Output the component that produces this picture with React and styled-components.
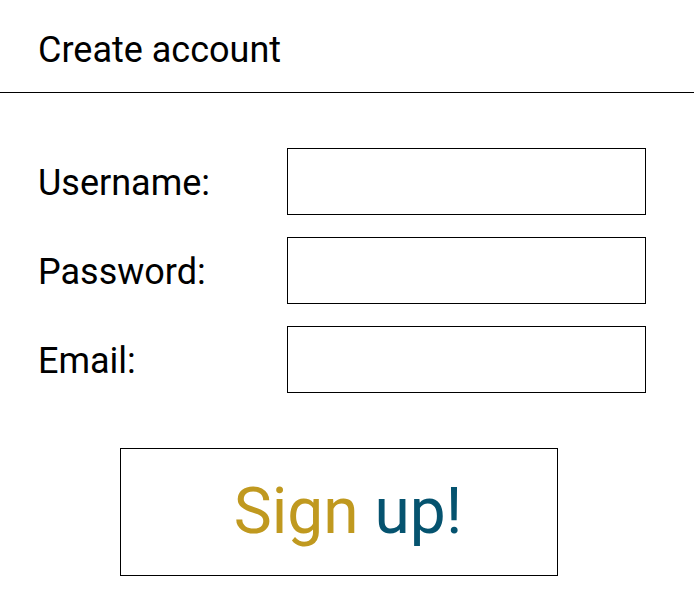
import React from 'react'
import styled, { createGlobalStyle } from 'styled-components'

const GlobalStyle = createGlobalStyle`
  html, body {
    margin: 0;
    padding: 0;
    background: #ffffff;
    font-family: Roboto, 'Liberation Sans', sans-serif;
    color: #000000;
  }
`

const fields = ['Username:', 'Password:', 'Email:']

const App = () => {
  return (
    <Page>
      <GlobalStyle />
      <Header>
        <Title>Create account</Title>
      </Header>
      <Form>
        {fields.map((label) => (
          <Row key={label}>
            <Label>{label}</Label>
            <Input type="text" />
          </Row>
        ))}
        <Button type="button">
          <Gold>Sign</Gold> <Blue>up!</Blue>
        </Button>
      </Form>
    </Page>
  )
}

export default App

const Page = styled.div`
  width: 694px;
  height: 600px;
  overflow: hidden;
`

const Header = styled.div`
  height: 93px;
  border-bottom: 1px solid #000000;
  display: flex;
  align-items: center;
  padding: 8px 0 0 38px;
  box-sizing: border-box;
`

const Title = styled.h1`
  margin: 0;
  font-size: 36px;
  font-weight: 400;
  line-height: 1;
`

const Form = styled.div`
  display: flex;
  flex-direction: column;
  gap: 22px;
  padding: 55px 0 0 38px;
`

const Row = styled.div`
  display: flex;
  align-items: center;
`

const Label = styled.label`
  width: 249px;
  padding-top: 2px;
  font-size: 36px;
  line-height: 1;
`

const Input = styled.input`
  width: 359px;
  height: 67px;
  box-sizing: border-box;
  border: 1px solid #000000;
  border-radius: 0;
  outline: none;
  padding: 0 8px;
  font-size: 24px;
  font-family: inherit;
`

const Button = styled.button`
  margin: 33px 0 0 82px;
  width: 438px;
  height: 128px;
  box-sizing: border-box;
  background: #ffffff;
  border: 1px solid #000000;
  border-radius: 0;
  padding: 0 0 0 18px;
  font-family: Roboto, 'Liberation Sans', sans-serif;
  font-size: 64px;
  line-height: 1;
  cursor: pointer;
`

const Gold = styled.span`
  color: #c0991f;
`

const Blue = styled.span`
  color: #05536f;
`
